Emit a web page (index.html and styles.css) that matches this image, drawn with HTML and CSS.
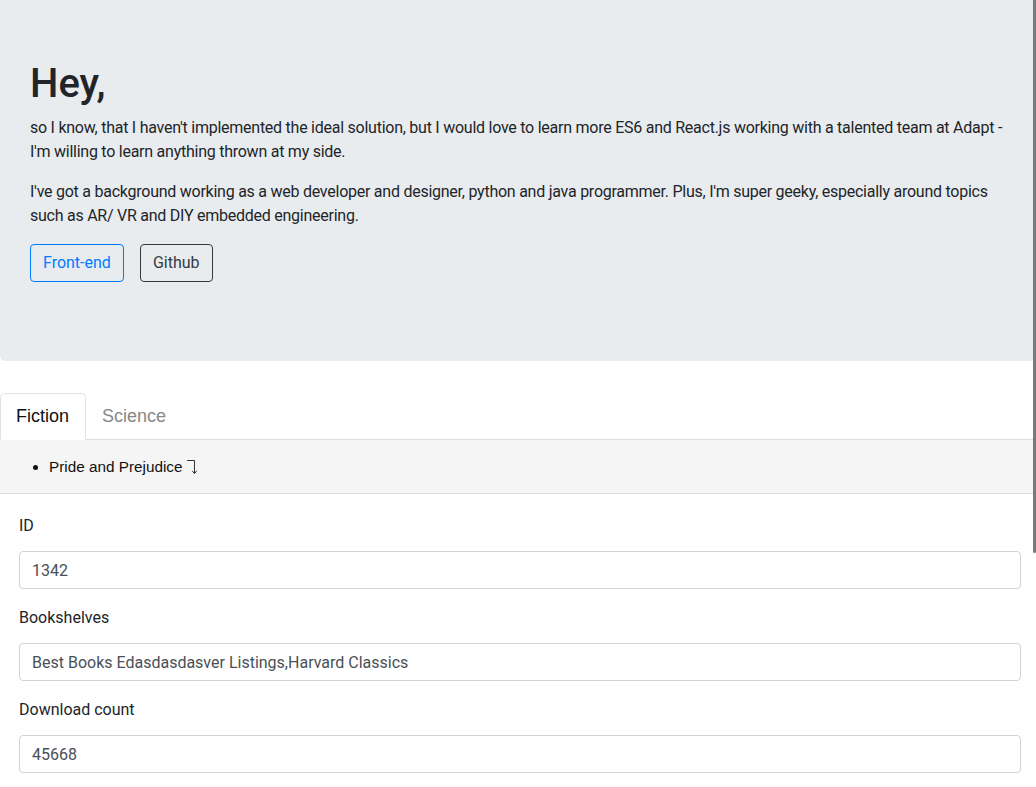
FILE: index.html
```html
<!DOCTYPE html>
<html lang="en">
<head>
<meta charset="utf-8">
<title>Hey</title>
<link rel="stylesheet" href="styles.css">
</head>
<body>
<div class="jumbotron">
  <h1 class="title">Hey,</h1>
  <p class="lead-text">so I know, that I haven't implemented the ideal solution, but I would love to learn more ES6 and React.js working with a talented team at Adapt - I'm willing to learn anything thrown at my side.</p>
  <p class="lead-text">I've got a background working as a web developer and designer, python and java programmer. Plus, I'm super geeky, especially around topics such as AR/ VR and DIY embedded engineering.</p>
  <div class="actions">
    <a class="btn btn-primary-outline">Front-end</a>
    <a class="btn btn-dark-outline">Github</a>
  </div>
</div>

<div class="tabs">
  <ul class="tab-list">
    <li class="tab tab-selected">Fiction</li>
    <li class="tab">Science</li>
  </ul>
  <div class="book-list">
    <ul class="books">
      <li>Pride and Prejudice <svg class="toggle" width="12" height="16" viewBox="0 0 12 16"><path d="M1 1.5 H8.5 V14.5 M6.2 11.8 L8.5 14.6 L10.8 11.8" fill="none" stroke="#333" stroke-width="1"/></svg></li>
    </ul>
  </div>
  <form class="book-form">
    <div class="form-group">
      <label class="form-label">ID</label>
      <input class="form-control" type="text" value="1342">
    </div>
    <div class="form-group">
      <label class="form-label">Bookshelves</label>
      <input class="form-control" type="text" value="Best Books Edasdasdasver Listings,Harvard Classics">
    </div>
    <div class="form-group">
      <label class="form-label">Download count</label>
      <input class="form-control" type="text" value="45668">
    </div>
  </form>
</div>
<div class="scroll-thumb"></div>
</body>
</html>
```

FILE: styles.css
```css
html, body {
  margin: 0;
  padding: 0;
}
body {
  font-family: Roboto, "Noto Sans", sans-serif;
  font-size: 16px;
  line-height: 1.5;
  color: #212529;
  background: #fff;
  overflow: hidden;
}
.jumbotron {
  background: #e9ecef;
  padding: 60px 30px 63px 30px;
  border-radius: 0 0 5px 5px;
  margin-bottom: 32px;
}
.title {
  margin: 0 0 8px 0;
  font-size: 40px;
  font-weight: 500;
  line-height: 1.2;
}
.lead-text {
  margin: 0 0 16px 0;
  letter-spacing: -0.25px;
}
.actions {
  display: flex;
  gap: 16px;
  margin-bottom: 16px;
}
.btn {
  display: inline-block;
  padding: 6px 12px;
  border: 1px solid;
  border-radius: 4px;
  font-size: 16px;
  line-height: 24px;
  background: transparent;
}
.btn-primary-outline {
  color: #007bff;
  border-color: #007bff;
}
.btn-dark-outline {
  color: #343a40;
  border-color: #343a40;
}
.tab-list {
  list-style: none;
  margin: 0;
  padding: 0;
  display: flex;
  border-bottom: 1px solid #ddd;
  font-family: "Liberation Sans", Arial, sans-serif;
  font-size: 18px;
}
.tab {
  padding: 12px 16px 12px 15px;
  line-height: 21px;
  color: #888;
  border: 1px solid transparent;
  border-bottom: none;
  border-radius: 5px 5px 0 0;
  margin-bottom: -1px;
}
.tab-selected {
  color: #111;
  background: #fff;
  border-color: #e3e3e3;
  border-bottom: 1px solid #fff;
}
.book-list {
  background: #f5f5f5;
  border-bottom: 1px solid #ddd;
}
.books {
  margin: 0;
  padding: 14px 0 14px 49px;
  font-family: "Liberation Sans", Arial, sans-serif;
  font-size: 15.3px;
  line-height: 25px;
  color: #111;
}
.toggle {
  vertical-align: -3px;
  margin-left: -1px;
}
.book-form {
  padding: 19px 15px 0 19px;
}
.form-group {
  margin-bottom: 16px;
}
.form-label {
  display: block;
  padding-top: 1px;
  margin-bottom: 13px;
}
.form-control {
  display: block;
  box-sizing: border-box;
  width: 100%;
  height: 38px;
  padding: 6px 12px;
  font-family: Roboto, "Noto Sans", sans-serif;
  font-size: 16px;
  line-height: 24px;
  color: #495057;
  background: #fff;
  border: 1px solid #ced4da;
  border-radius: 4px;
  margin: 0;
}
.scroll-thumb {
  position: fixed;
  top: 0;
  right: 0;
  width: 3px;
  height: 553px;
  background: #7a7a7a;
  border-radius: 0 0 2px 2px;
}
```
